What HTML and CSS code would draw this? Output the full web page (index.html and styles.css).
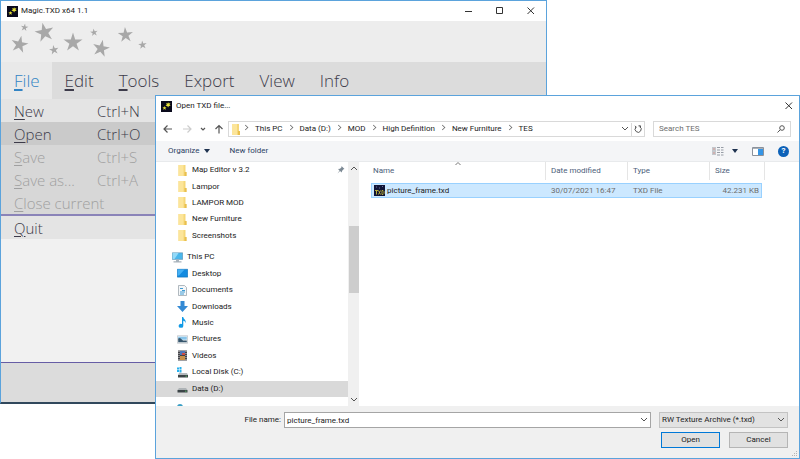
FILE: index.html
```html
<!DOCTYPE html>
<html lang="en">
<head>
<meta charset="utf-8">
<title>Magic.TXD x64 1.1</title>
<link rel="stylesheet" href="styles.css">
</head>
<body>
<svg class="defs" aria-hidden="true">
  <symbol id="star" viewBox="-10 -10 20 20"><path d="M0-10 2.200-3 9.500-3.100 3.600 1.200 5.900 8.100 0 3.800-5.900 8.100-3.600 1.200-9.500-3.100-2.200-3Z"/></symbol>
  <symbol id="app" viewBox="0 0 11 11"><path fill="#0a0a1c" d="M0 0h11v11H0z"/><path fill="#e6e23a" d="m7 1 .7 1.500 1.800-.5-1 1.600 1.200 1.200-1.800.1-.8 1.600-.8-1.600-1.800-.2 1.300-1.100-.6-1.600 1.700.5zM3.500 5l.5 1.300 1.500 0-1.100 1 .5 1.500-1.400-.8-1.300.8.4-1.500-1.200-1 1.600 0z"/></symbol>
  <symbol id="folder" viewBox="0 0 10 11"><path fill="#f5d778" d="M1 0h7v7l1 0v4H1z"/><path fill="#fce59a" d="M1 0h5v11H1z"/><path fill="#e9bf4e" d="M7 7h2v4H7z"/></symbol>
  <symbol id="down" viewBox="0 0 8 6"><path d="m1 1 3 3 3-3" fill="none" stroke="currentColor"/></symbol>
</svg>

<main class="desktop">
<section class="app">
  <header class="titlebar">
    <svg class="app-icon"><use href="#app"/></svg>
    <h1>Magic.TXD x64 1.1</h1>
    <div class="window-buttons">
      <button aria-label="Minimize"><svg viewBox="0 0 8 8"><path d="M0 4.500h7"/></svg></button>
      <button aria-label="Maximize"><svg viewBox="0 0 8 8"><path d="M.5.5h6v6h-6z"/></svg></button>
      <button aria-label="Close"><svg viewBox="0 0 8 8"><path d="m.5.5 6.500 6.500M7 .5.5 7"/></svg></button>
    </div>
  </header>
  <div class="banner">
    <svg viewBox="0 0 150 41" fill="#a8a8a8">
      <use href="#star" x="-4" y="-4" width="8" height="8" transform="translate(23.500 6.500) rotate(8)"/>
      <use href="#star" x="-10" y="-10" width="20" height="20" transform="translate(43.500 11.500) rotate(-12)"/>
      <use href="#star" x="-9" y="-9" width="18" height="18" transform="translate(18.500 23.500) rotate(12)"/>
      <use href="#star" x="-5" y="-5" width="10" height="10" transform="translate(53 29) rotate(-10)"/>
      <use href="#star" x="-10" y="-10" width="20" height="20" transform="translate(72 21.500)"/>
      <use href="#star" x="-4" y="-4" width="8" height="8" transform="translate(93 11.500) rotate(-8)"/>
      <use href="#star" x="-9" y="-9" width="18" height="18" transform="translate(100 27.500) rotate(12)"/>
      <use href="#star" x="-8" y="-8" width="16" height="16" transform="translate(124.500 14) rotate(-4)"/>
      <use href="#star" x="-4" y="-4" width="9" height="9" transform="translate(141 23.500) rotate(-6)"/>
    </svg>
  </div>
  <nav class="menubar">
    <button class="active"><u>F</u>ile</button>
    <button><u>E</u>dit</button>
    <button><u>T</u>ools</button>
    <button>Export</button>
    <button>View</button>
    <button>Info</button>
  </nav>
  <div class="workspace">
    <div class="menu">
      <button><span><u>N</u>ew</span><kbd>Ctrl+N</kbd></button>
      <button class="hover"><span><u>O</u>pen</span><kbd>Ctrl+O</kbd></button>
      <button disabled><span><u>S</u>ave</span><kbd>Ctrl+S</kbd></button>
      <button disabled><span><u>S</u>ave as...</span><kbd>Ctrl+A</kbd></button>
      <button disabled><span><u>C</u>lose current</span></button>
      <hr>
      <button><span><u>Q</u>uit</span></button>
    </div>
  </div>
  <footer class="status"></footer>
</section>

<section class="dialog" role="dialog" aria-labelledby="dialog-title">
  <header class="dialog-title">
    <svg class="app-icon"><use href="#app"/></svg>
    <h2 id="dialog-title">Open TXD file...</h2>
    <button aria-label="Close"><svg viewBox="0 0 8 8"><path d="m.5.5 6.500 6.500M7 .5.5 7"/></svg></button>
  </header>

  <div class="navigation">
    <div class="arrows">
      <button aria-label="Back"><svg viewBox="0 0 10 10"><path d="M9 5H1.500M4.500 1.500 1 5l3.500 3.500"/></svg></button>
      <button aria-label="Forward" disabled><svg viewBox="0 0 10 10"><path d="M1 5h7.500M5.500 1.500 9 5 5.500 8.500"/></svg></button>
      <button aria-label="Recent locations" class="recent"><svg viewBox="0 0 8 6"><path d="m2 2 2 2 2-2"/></svg></button>
      <button aria-label="Up"><svg viewBox="0 0 10 10"><path d="M5 9.500V1.500M1.500 5 5 1.500 8.500 5"/></svg></button>
    </div>
    <div class="address">
      <svg class="folder"><use href="#folder"/></svg>
      <ol>
        <li><a href="#">This PC</a></li>
        <li><a href="#">Data (D:)</a></li>
        <li><a href="#">MOD</a></li>
        <li><a href="#">High Definition</a></li>
        <li><a href="#">New Furniture</a></li>
        <li><a href="#">TES</a></li>
      </ol>
      <button aria-label="Previous locations"><svg class="chevron"><use href="#down"/></svg></button>
      <button aria-label="Refresh" class="refresh"><svg viewBox="0 0 8 8"><path d="M2 2.200A3 3 0 1 0 5.500 1.600M1 .8l1.200 1.400L1 3.200M4.500.8h2v2"/></svg></button>
    </div>
    <div class="search">
      <input type="text" placeholder="Search TES" aria-label="Search TES">
      <svg viewBox="0 0 8 8"><circle cx="5" cy="3" r="2.300"/><path d="M3.300 4.700.5 7.500"/></svg>
    </div>
  </div>

  <div class="toolbar">
    <button>Organize <svg class="caret" viewBox="0 0 6 4"><path d="M0 0h6L3 4z"/></svg></button>
    <button>New folder</button>
    <div class="view-tools">
      <button aria-label="Change view"><svg width="12" height="9" viewBox="0 0 12 9"><path fill="#c3c7cc" d="M0 0h4v8H0z"/><path stroke="#d99a94" d="M1 2h2M1 6h2"/><path stroke="#969ca5" d="M5 .5h3M9 .5h2.500M5 3h3M9 3h2.500M5 5.500h3M9 5.500h2.500M5 8h3M9 8h2.500"/></svg></button>
      <button aria-label="More views"><svg class="caret" viewBox="0 0 6 4"><path d="M0 0h6L3 4z"/></svg></button>
      <button aria-label="Preview pane"><svg width="12" height="9" viewBox="0 0 12 9"><path fill="#fff" stroke="#8a919b" d="M.5.5h11v8H.5z"/><path fill="#3595e6" d="M6 1h5v7H6z"/><path stroke="#a9b0b8" d="M1 1.500h10"/></svg></button>
      <button aria-label="Help" class="help">?</button>
    </div>
  </div>

  <div class="browser">
    <nav class="tree">
      <ul class="quick">
        <li><svg><use href="#folder"/></svg>Map Editor v 3.2<svg class="pin" viewBox="0 0 8 8"><path fill="#7c8994" d="m4.500 0 3 3-1 .3L5 5l-.2 1.500L3 5 .5 7.500 2.500 4.500 1 3l2-.2 1.500-1.600z"/></svg></li>
        <li><svg><use href="#folder"/></svg>Lampor</li>
        <li><svg><use href="#folder"/></svg>LAMPOR MOD</li>
        <li><svg><use href="#folder"/></svg>New Furniture</li>
        <li><svg><use href="#folder"/></svg>Screenshots</li>
      </ul>
      <ul class="places">
        <li class="root"><svg viewBox="0 0 11 11"><path fill="#4ab7ec" stroke="#5d8ba9" stroke-width=".6" d="M.3.800h10.400v6.600H.3z"/><path fill="#93d9f8" d="M.6 1.100h6L2.500 7H.6z"/><path fill="#a7b2bb" d="M4 7.500h3v1.700h2.500v1.300h-8V9.200H4z"/></svg>This PC</li>
        <li><svg viewBox="0 0 11 11"><path fill="#138be0" stroke="#0c6cb4" stroke-width=".6" d="M.3 1.300h10.400v7.800H.3z"/><path fill="#43b0f5" d="M.6 1.600h7L2 7.500H.6z"/></svg>Desktop</li>
        <li><svg viewBox="0 0 11 11"><path fill="#f4f7f9" stroke="#929ca5" stroke-width=".7" d="M1.500.5h6l2 2v8h-8z"/><path stroke="#3f9bd3" d="M3 3.500h3M5 5.500h3M3 7h5M3 9h4"/></svg>Documents</li>
        <li><svg viewBox="0 0 11 11"><path fill="#348ad4" d="M3.500 0h4v5H11l-5.500 6L0 5h3.500z"/></svg>Downloads</li>
        <li><svg viewBox="0 0 11 11"><path fill="#119ae6" d="M5 0h1.200c.2 2 3.300 2.600 2.300 6.200-.2-1.700-.9-2.300-2.200-2.500v5A2.300 2 0 1 1 5 7z"/></svg>Music</li>
        <li><svg viewBox="0 0 11 11"><path fill="#f8fafb" stroke="#a6adb3" stroke-width=".6" d="M.3 1.800h10.400v7.400H.3z"/><path fill="#88c5eb" d="M1.200 2.700h8.600v3H1.200z"/><path fill="#36566d" d="M1.200 4.500 3 4l3 2.500 3.800.1v1.700H1.200z"/></svg>Pictures</li>
        <li><svg viewBox="0 0 11 11"><path fill="#424348" d="M1 .5h9v10H1z"/><path fill="#4f77b8" d="M3 1h5v4H3z"/><path fill="#c89048" d="M3 6h5v4H3z"/><path stroke="#d5d5d5" stroke-dasharray="1 1" d="M2 1v9M9 1v9"/><path fill="#d14c44" d="M5 3h3v2H5z"/></svg>Videos</li>
        <li><svg viewBox="0 0 11 11"><path fill="#27b0ed" d="M0 .5h2v2H0zM2.500 0h2v2.500h-2zM0 3h2v2H0zM2.500 3h2v2.500h-2z"/><path fill="#b4b9bd" d="m2 6 8 0 1 2H1z"/><path fill="#3c4447" d="M1 8h10v2.500H1z"/><path fill="#5fd36c" d="M8.500 8.800h1.500v.8H8.500z"/></svg>Local Disk (C:)</li>
        <li class="selected"><svg viewBox="0 0 11 11"><path fill="#aeb3b6" d="m2 5 7 0 1.500 2H.5z"/><path fill="#3c4447" d="M.5 7h10v2.500H.5z"/><path fill="#5fd36c" d="M8 7.800h1.500v.8H8z"/></svg>Data (D:)</li>
      </ul>
      <svg class="more" viewBox="0 0 8 8"><circle cx="4" cy="4" r="3" fill="#3b9fc5"/></svg>
    </nav>
    <div class="scrollbar">
      <svg class="chevron up"><use href="#down"/></svg>
      <div class="thumb"></div>
      <svg class="chevron"><use href="#down"/></svg>
    </div>
    <div class="files">
      <table>
        <colgroup><col><col class="medium"><col class="medium"><col class="size"><col class="edge"></colgroup>
        <thead><tr><th>Name<svg class="sort" viewBox="0 0 8 6"><path d="m1.500 4 2.500-2.500L6.500 4"/></svg></th><th>Date modified</th><th>Type</th><th colspan="2">Size</th></tr></thead>
        <tbody><tr><td><svg viewBox="0 0 11 11"><path fill="#111436" d="M0 0h11v11H0z"/><path stroke="#b6ac39" fill="none" d="M1 5.500h3M2.500 5.500v4M4.500 5.500l2 4M6.500 5.500l-2 4M8 5.500v4h1l1-1v-2l-1-1z"/><path stroke="#6970a0" d="M2 2h1M5 3h1M8 1.500h1"/></svg>picture_frame.txd</td><td>30/07/2021 16:47</td><td>TXD File</td><td>42.231 KB</td></tr></tbody>
      </table>
    </div>
  </div>

  <form class="actions">
    <label for="filename">File name:</label>
    <div class="field">
      <input id="filename" type="text" value="picture_frame.txd">
      <svg class="chevron"><use href="#down"/></svg>
    </div>
    <div class="field type">
      <select aria-label="File type"><option>RW Texture Archive (*.txd)</option></select>
      <svg class="chevron"><use href="#down"/></svg>
    </div>
    <div class="buttons">
      <button type="button" class="default">Open</button>
      <button type="button">Cancel</button>
    </div>
    <svg class="grip" viewBox="0 0 6 6"><path fill="#b5b5b5" d="M4 0h1v1H4zM2 2h1v1H2zM4 2h1v1H4zM0 4h1v1H0zM2 4h1v1H2zM4 4h1v1H4z"/></svg>
  </form>
</section>
</main>
</body>
</html>
```
FILE: styles.css
```css
* { box-sizing: border-box; }

body {
  margin: 0;
  background: #fff;
  color: #222;
  font: 8px/12px Roboto, "Open Sans", sans-serif;
}

button, input, select {
  margin: 0;
  padding: 0;
  border: 0;
  background: none;
  color: inherit;
  font: inherit;
}

h1, h2, ul, ol { margin: 0; padding: 0; font: inherit; list-style: none; }
a { color: inherit; text-decoration: none; }
svg { display: block; flex: none; }
.defs { position: absolute; width: 0; height: 0; }
.desktop { position: relative; height: 100vh; overflow: hidden; }
.app-icon { width: 11px; height: 11px; }
.chevron { width: 8px; height: 6px; color: #555; }

/* Main window */
.app {
  position: absolute;
  inset: 0 253px 55px 0;
  display: flex;
  flex-direction: column;
  border: 1px solid #5ba3dc;
  border-bottom: 2px solid #31485c;
}

.titlebar { display: flex; align-items: center; height: 20px; padding-left: 6px; gap: 3px; }
.window-buttons { display: flex; margin-left: auto; }
.window-buttons button { display: grid; place-items: center; width: 31px; height: 20px; }
.window-buttons svg, .dialog-title button svg { width: 8px; height: 8px; fill: none; stroke: #333; }

.banner { height: 41px; background: #ededed; }
.banner svg { width: 150px; height: 41px; }

.menubar {
  display: flex;
  height: 37px;
  background: #dcdcdc;
  color: #3d3b4a;
  font-family: "Open Sans", sans-serif;
  font-size: 17px;
  font-weight: 300;
  line-height: 24px;
}
.menubar button { padding: 0 12px 0 13px; }
.menubar .active { background: #e9e9e9; color: #3384c4; }
u { text-underline-offset: 2px; text-decoration-thickness: 1px; }
.menubar u { text-decoration-thickness: 2px; }

.workspace { flex: 1; background: #f1f1f1; border-bottom: 1px solid #665da5; }
.menu { width: 180px; color: #3d3b4a; font-family: "Open Sans", sans-serif; font-size: 15px; font-weight: 300; }
.menu button { display: flex; align-items: center; width: 100%; height: 23px; padding-left: 13px; background: #e4e4e4; line-height: 22px; text-align: left; }
.menu span { width: 83px; white-space: nowrap; }
.menu kbd { font: inherit; }
.menu .hover { background: #cacaca; }
.menu button:disabled { background: #d7d7d7; color: #a0a0a0; }
.menu hr { height: 2px; margin: 0; border: 0; background: #8a83b8; }
.status { height: 39px; background: #dcdcdc; }

/* File dialog */
.dialog {
  position: absolute;
  inset: 95px 0 0 155px;
  display: flex;
  flex-direction: column;
  border: 1px solid #5ba3dc;
  background: #fff;
}

.dialog-title { display: flex; align-items: center; height: 20px; padding: 0 6px 0 5px; gap: 4px; }
.dialog-title button { margin-left: auto; }

.navigation { display: flex; height: 25px; padding: 5px 8px 4px 0; gap: 8px; }
.arrows { display: flex; align-items: center; gap: 9px; width: 64px; padding-left: 7px; }
.arrows svg { width: 10px; height: 10px; fill: none; stroke: #565656; stroke-width: 1.2; }
.arrows button:disabled svg { stroke: #ccc; }
.arrows .recent svg { width: 8px; height: 6px; }
.arrows .recent { margin: 0 -2px; }
.address { display: flex; flex: 1; align-items: center; border: 1px solid #d9d9d9; padding-left: 2px; }
.folder { width: 10px; height: 11px; }
.address ol { display: flex; flex: 1; white-space: nowrap; }
.address li::before {
  content: "";
  display: inline-block;
  width: 4px;
  height: 4px;
  margin: 0 7px 1px 2px;
  border: solid #666;
  border-width: 1px 1px 0 0;
  transform: rotate(45deg) scale(.8);
}
.address li + li::before { margin-left: 5px; }
.address button { display: grid; place-items: center; width: 13px; height: 13px; }
.address .refresh { border-left: 1px solid #d9d9d9; }
.refresh svg, .search svg { width: 8px; height: 8px; fill: none; stroke: #555; }
.search { display: flex; align-items: center; width: 138px; padding: 0 5px; border: 1px solid #d9d9d9; }
.search input { flex: 1; min-width: 0; outline: 0; }
.search input::placeholder { color: #6d6d6d; opacity: 1; }

.toolbar { display: flex; align-items: center; height: 20px; padding: 0 10px 0 12px; gap: 20px; background: #f4f5f7; color: #2b3f63; }
.toolbar button { display: flex; align-items: center; gap: 4px; }
.caret { width: 6px; height: 4px; fill: #1e3250; }
.view-tools { display: flex; align-items: center; margin-left: auto; gap: 14px; }
.view-tools button:first-child { margin-right: -6px; }
.toolbar .help { justify-content: center; width: 11px; height: 11px; border-radius: 50%; background: #0c61b8; color: #fff; font-weight: 700; }

.browser { display: flex; flex: 1; min-height: 0; border-top: 1px solid #e8eaec; }
.tree { display: flex; flex-direction: column; width: 192px; overflow: hidden; }
.tree ul { display: grid; grid-auto-rows: 1fr; flex: none; }
.quick { height: 82px; margin-bottom: 5px; }
.places { height: 148px; }
.tree li { display: flex; align-items: center; padding-left: 21px; gap: 4px; }
.tree li svg { width: 11px; height: 11px; }
.tree .root { padding-left: 16px; }
.tree .selected { background: #d9d9d9; }
.tree li .pin { width: 8px; height: 8px; margin-left: auto; margin-right: 3px; }
.more { width: 8px; height: 8px; margin: 6px 0 0 20px; }

.scrollbar { display: flex; flex-direction: column; align-items: center; width: 11px; padding: 3px 0; background: #f0f0f0; }
.scrollbar .up { transform: rotate(180deg); }
.thumb { width: 10px; height: 67px; margin: 55px 0 auto; background: #cdcdcd; }

.files { flex: 1; padding-left: 12px; }
table { width: 394px; table-layout: fixed; border-spacing: 0; }
.medium { width: 82px; }
.size { width: 52px; }
.edge { width: 3px; }
th { position: relative; height: 18px; padding: 0 4px 0 2px; border-right: 1px solid #e5e5e5; color: #4c607a; font-weight: 400; text-align: left; }
th + th { padding-left: 5px; }
.sort { position: absolute; top: -1px; left: 50%; width: 8px; height: 6px; margin-left: -4px; fill: none; stroke: #777; }
tbody::before { content: ""; display: block; height: 3px; }
td { height: 15px; padding: 0 0 0 5px; border: solid #99d1ff; border-width: 1px 0; background: #cce8ff; color: #6d6d6d; white-space: nowrap; }
td:first-child { padding-left: 2px; border-left-width: 1px; color: #222; }
td:last-child { padding-right: 2px; border-right-width: 1px; text-align: right; }
td svg { display: inline-block; width: 11px; height: 11px; margin-right: 2px; vertical-align: middle; }

.actions {
  position: relative;
  display: grid;
  grid-template-columns: 125px 1fr 129px;
  grid-template-rows: 16px 16px;
  gap: 4px 0;
  height: 52px;
  padding: 6px 11px 9px 0;
  background: #f0f0f0;
}
.actions label { text-align: right; line-height: 16px; }
.field { display: flex; align-items: center; margin: 0 8px 0 3px; border: 1px solid #a5a5a5; background: #fff; padding-right: 2px; }
.field input, .field select { flex: 1; min-width: 0; height: 14px; padding-left: 2px; outline: 0; appearance: none; }
.field.type { margin: 0; border-color: #c3c3c3; background: #e2e2e2; }
.buttons { grid-column: 2 / 4; display: flex; justify-content: flex-end; gap: 9px; }
.buttons button { width: 59px; border: 1px solid #b5b5b5; background: #e1e1e1; }
.buttons .default { border-color: #0078d7; }
.grip { position: absolute; right: 1px; bottom: 1px; width: 6px; height: 6px; }
```
